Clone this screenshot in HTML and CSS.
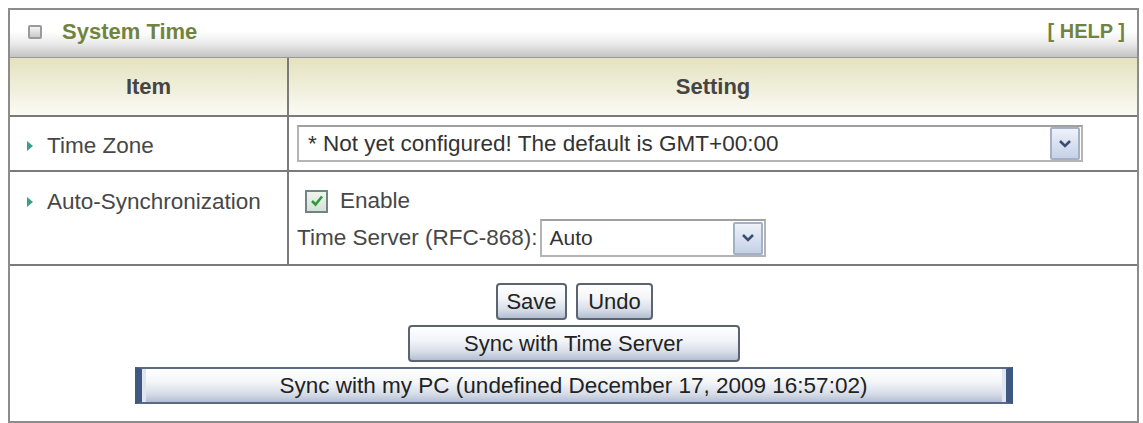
FILE: index.html
```html
<!DOCTYPE html>
<html>
<head>
<meta charset="utf-8">
<link rel="stylesheet" href="styles.css">
</head>
<body>
<div class="panel">
  <div class="titlebar">
    <div class="title"><span class="ticon"></span>System Time</div>
    <div class="help">[ HELP ]</div>
  </div>
  <div class="grid">
    <div class="hcell">Item</div>
    <div class="hcell">Setting</div>

    <div class="lcell r1"><div class="label"><span class="arrow"></span>Time Zone</div></div>
    <div class="rcell r1">
      <div class="select tz">
        <span class="seltext">* Not yet configured! The default is GMT+00:00</span>
        <span class="selbtn"><svg width="14" height="10" viewBox="0 0 14 10"><path d="M2 2 L7 7 L12 2" fill="none" stroke="#3b4d70" stroke-width="2.6"/></svg></span>
      </div>
    </div>

    <div class="lcell r2"><div class="label"><span class="arrow"></span>Auto-Synchronization</div></div>
    <div class="rcell r2 stack">
      <div class="chkline">
        <span class="chk"><svg width="18" height="18" viewBox="0 0 18 18"><path d="M4 9 L7.5 12.5 L14 4.5" fill="none" stroke="#2f9a3a" stroke-width="2.6"/></svg></span>
        <span>Enable</span>
      </div>
      <div class="srvline">
        <span>Time Server (RFC-868):</span>
        <div class="select srv">
          <span class="seltext">Auto</span>
          <span class="selbtn"><svg width="14" height="10" viewBox="0 0 14 10"><path d="M2 2 L7 7 L12 2" fill="none" stroke="#3b4d70" stroke-width="2.6"/></svg></span>
        </div>
      </div>
    </div>
  </div>
  <div class="actions">
    <div class="btnrow">
      <button class="btn save">Save</button>
      <button class="btn undo">Undo</button>
    </div>
    <button class="btn sts">Sync with Time Server</button>
    <button class="btn spc">Sync with my PC (undefined December 17, 2009 16:57:02)</button>
  </div>
</div>
</body>
</html>
```
FILE: styles.css
```css
html, body {
  margin: 0;
  padding: 0;
  background: #ffffff;
}
body {
  font-family: "Liberation Sans", Arial, sans-serif;
  color: #474747;
}
.panel {
  margin: 8px 0 0 8px;
  width: 1131px;
  height: 415px;
  box-sizing: border-box;
  border: 2px solid #8c8c8c;
  display: flex;
  flex-direction: column;
}
.titlebar {
  height: 48px;
  box-sizing: border-box;
  display: flex;
  align-items: center;
  justify-content: space-between;
  padding: 0 12px 4px 18px;
  background: linear-gradient(#ffffff 0%, #ffffff 45%, #ececec 70%, #c4c4c4 100%);
  border-bottom: 1px solid #9a9a9a;
}
.title {
  display: flex;
  align-items: center;
  font-weight: bold;
  font-size: 22px;
  color: #71843f;
}
.ticon {
  width: 10px;
  height: 10px;
  border: 2px solid #9a9a9a;
  border-radius: 2px;
  background: linear-gradient(#f4f4f4, #c9c9c9);
  margin-right: 20px;
}
.help {
  font-weight: bold;
  font-size: 20px;
  color: #71843f;
}
.grid {
  display: grid;
  grid-template-columns: 279px 1fr;
}
.hcell {
  height: 59px;
  box-sizing: border-box;
  display: flex;
  align-items: center;
  justify-content: center;
  font-weight: bold;
  font-size: 22px;
  color: #454545;
  background: linear-gradient(#e4e2bf 0%, #efeed9 50%, #fbfbf6 100%);
  border-bottom: 2px solid #7a7a7a;
}
.hcell:first-child {
  border-right: 2px solid #7a7a7a;
}
.lcell {
  box-sizing: border-box;
  border-right: 2px solid #7a7a7a;
  border-bottom: 2px solid #7a7a7a;
  font-size: 22.5px;
  padding-left: 17px;
  display: flex;
  align-items: center;
}
.lcell.r1 {
  padding-top: 5px;
}
.lcell.r2 {
  align-items: flex-start;
  padding-top: 17px;
}
.label {
  display: flex;
  align-items: center;
}
.rcell {
  box-sizing: border-box;
  border-bottom: 2px solid #7a7a7a;
  font-size: 22.5px;
  padding-left: 8px;
  display: flex;
  align-items: center;
}
.r1 { height: 55px; }
.r2 { height: 94px; }
.arrow {
  width: 0;
  height: 0;
  border-top: 5px solid transparent;
  border-bottom: 5px solid transparent;
  border-left: 6px solid #3f9c8c;
  margin-right: 14px;
}
.select {
  display: flex;
  align-items: center;
  justify-content: space-between;
  box-sizing: border-box;
  border: 2px solid #b4b4b4;
  border-top-color: #a0a0a0;
  background: #ffffff;
  color: #333333;
  font-size: 22.5px;
}
.select.tz {
  width: 786px;
  height: 37px;
  padding: 0 0 0 9px;
}
.select.srv {
  width: 226px;
  height: 38px;
  padding: 0 0 0 7px;
  margin-left: 3px;
  font-size: 21px;
}
.seltext {
  white-space: nowrap;
}
.selbtn {
  width: 30px;
  height: 33px;
  box-sizing: border-box;
  border: 2px solid #a3b0c6;
  border-radius: 2px;
  background: linear-gradient(#eef2f9, #c4d1e6);
  display: flex;
  align-items: center;
  justify-content: center;
  margin-right: 1px;
}
.stack {
  flex-direction: column;
  align-items: flex-start;
  justify-content: flex-start;
  padding-top: 15px;
}
.chkline {
  display: flex;
  align-items: center;
  padding-left: 8px;
  height: 28px;
}
.chk {
  width: 23px;
  height: 23px;
  box-sizing: border-box;
  border: 2px solid #6f8585;
  background: linear-gradient(#eef4ee, #d5e2d8);
  display: flex;
  align-items: center;
  justify-content: center;
  margin-right: 12px;
}
.srvline {
  display: flex;
  align-items: center;
  margin-top: 4px;
}
.actions {
  flex: 1;
  display: flex;
  flex-direction: column;
  align-items: center;
  padding-top: 17px;
}
.btnrow {
  display: flex;
  gap: 9px;
}
.btn {
  font-family: "Liberation Sans", Arial, sans-serif;
  font-size: 22px;
  color: #222222;
  height: 37px;
  box-sizing: border-box;
  border: 2px solid #5c6470;
  border-radius: 4px;
  background: linear-gradient(#ffffff 0%, #f3f5f8 40%, #d7dde8 75%, #b3bed2 100%);
  padding: 0;
  margin: 0;
}
.save { width: 71px; margin-left: 2px; }
.undo { width: 77px; }
.sts {
  width: 332px;
  margin-top: 5px;
}
.spc {
  width: 878px;
  margin-top: 5px;
  font-size: 22.5px;
  border-radius: 0;
  border: 2px solid #5a6a84;
  border-left: 7px solid #3f5882;
  border-right: 7px solid #3f5882;
  box-shadow: inset 4px 0 0 #dfe6f2, inset -4px 0 0 #dfe6f2;
}
```
